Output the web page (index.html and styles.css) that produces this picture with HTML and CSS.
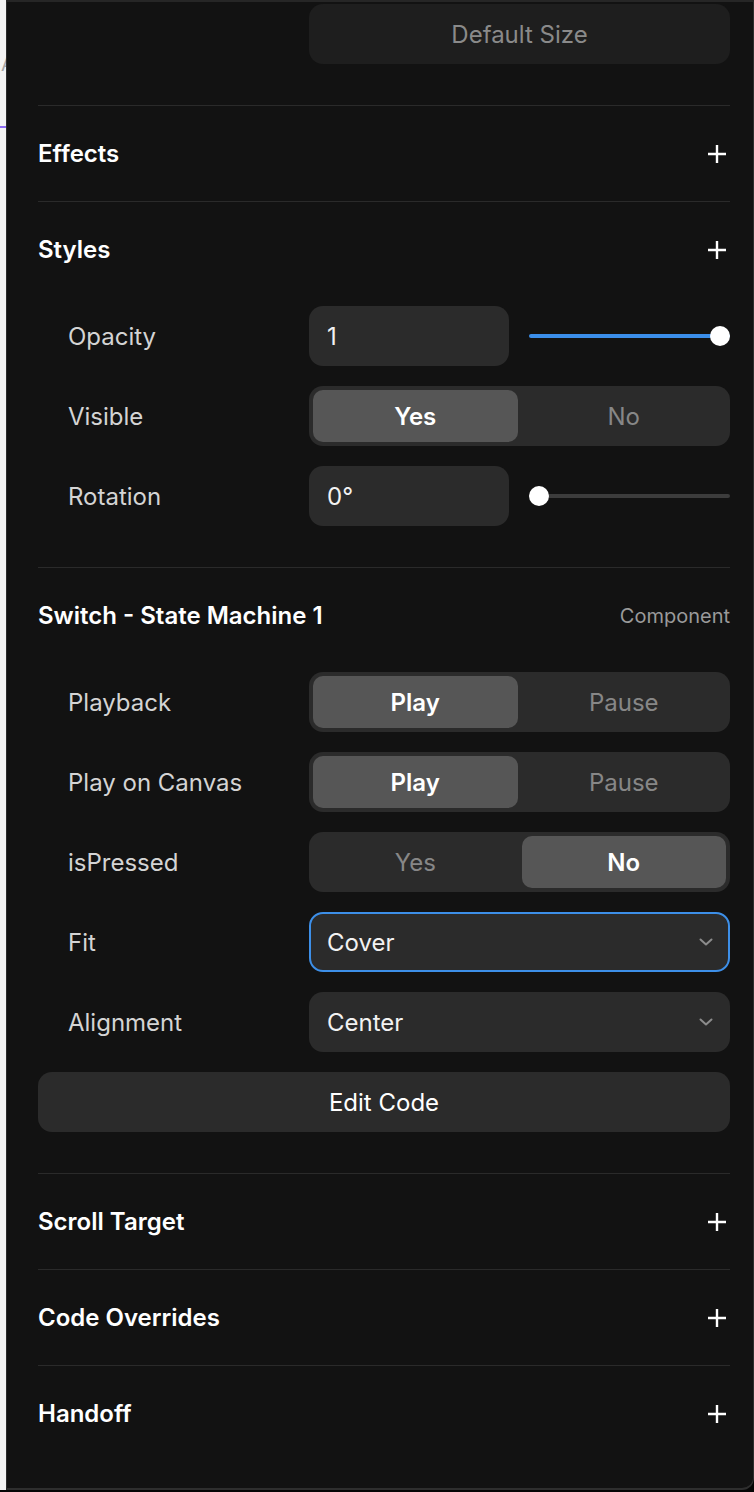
FILE: index.html
```html
<!DOCTYPE html>
<html>
<head>
<meta charset="utf-8">
<link rel="stylesheet" href="styles.css">
</head>
<body>
<div class="frame">
  <div class="strip">
    <span class="strip-letter">A</span>
    <span class="strip-line"></span>
  </div>
  <div class="panel">
    <div class="top-row">
      <div class="ghost-btn">Default Size</div>
    </div>

    <section class="section">
      <div class="sec-head"><span class="sec-title">Effects</span><svg class="plus" viewBox="0 0 18 18"><path d="M9 0V18M0 9H18"/></svg></div>
    </section>

    <section class="section">
      <div class="sec-head"><span class="sec-title">Styles</span><svg class="plus" viewBox="0 0 18 18"><path d="M9 0V18M0 9H18"/></svg></div>
      <div class="rows">
        <div class="row">
          <span class="label">Opacity</span>
          <div class="ctrl split">
            <div class="input">1</div>
            <div class="slider"><div class="track"><div class="fill" style="width:100%"></div></div><div class="thumb" style="left:100%"></div></div>
          </div>
        </div>
        <div class="row">
          <span class="label">Visible</span>
          <div class="ctrl seg">
            <div class="seg-item on">Yes</div>
            <div class="seg-item">No</div>
          </div>
        </div>
        <div class="row">
          <span class="label">Rotation</span>
          <div class="ctrl split">
            <div class="input">0°</div>
            <div class="slider"><div class="track"></div><div class="thumb" style="left:0%"></div></div>
          </div>
        </div>
      </div>
    </section>

    <section class="section">
      <div class="sec-head"><span class="sec-title">Switch - State Machine 1</span><span class="sec-meta">Component</span></div>
      <div class="rows">
        <div class="row">
          <span class="label">Playback</span>
          <div class="ctrl seg">
            <div class="seg-item on">Play</div>
            <div class="seg-item">Pause</div>
          </div>
        </div>
        <div class="row">
          <span class="label">Play on Canvas</span>
          <div class="ctrl seg">
            <div class="seg-item on">Play</div>
            <div class="seg-item">Pause</div>
          </div>
        </div>
        <div class="row">
          <span class="label">isPressed</span>
          <div class="ctrl seg">
            <div class="seg-item">Yes</div>
            <div class="seg-item on">No</div>
          </div>
        </div>
        <div class="row">
          <span class="label">Fit</span>
          <div class="ctrl select focus">
            <span>Cover</span>
            <svg class="chev" viewBox="0 0 14 8"><path d="M1.5 1.5L7 6.5L12.5 1.5"/></svg>
          </div>
        </div>
        <div class="row">
          <span class="label">Alignment</span>
          <div class="ctrl select">
            <span>Center</span>
            <svg class="chev" viewBox="0 0 14 8"><path d="M1.5 1.5L7 6.5L12.5 1.5"/></svg>
          </div>
        </div>
        <div class="wide-btn">Edit Code</div>
      </div>
    </section>

    <section class="section">
      <div class="sec-head"><span class="sec-title">Scroll Target</span><svg class="plus" viewBox="0 0 18 18"><path d="M9 0V18M0 9H18"/></svg></div>
    </section>

    <section class="section">
      <div class="sec-head"><span class="sec-title">Code Overrides</span><svg class="plus" viewBox="0 0 18 18"><path d="M9 0V18M0 9H18"/></svg></div>
    </section>

    <section class="section last">
      <div class="sec-head"><span class="sec-title">Handoff</span><svg class="plus" viewBox="0 0 18 18"><path d="M9 0V18M0 9H18"/></svg></div>
    </section>
  </div>
</div>
</body>
</html>
```

FILE: styles.css
```css
html, body {
  margin: 0;
  padding: 0;
  background: #050505;
}

body {
  font-family: Inter, "Noto Sans", sans-serif;
  color: #fff;
  -webkit-font-smoothing: antialiased;
}

.frame {
  display: flex;
  width: 754px;
  height: 1490px;
}

.strip {
  position: relative;
  width: 6px;
  flex: none;
  background: #f4f4f4;
  overflow: hidden;
}

.strip-letter {
  position: absolute;
  left: 1px;
  top: 54px;
  font-size: 19px;
  line-height: 22px;
  color: #a6a6a6;
}

.strip-line {
  position: absolute;
  left: 0;
  top: 126px;
  width: 6px;
  height: 2px;
  background: #8d6cf2;
}

.panel {
  flex: 1;
  box-sizing: border-box;
  background: #121212;
  border-left: 1px solid #2c2c2c;
  border-top: 2px solid #262626;
  border-bottom: 2px solid #2e2e2e;
  border-right: 1px solid #2e2e2e;
  border-bottom-right-radius: 12px;
  padding: 2px 23px 0 31px;
}

.top-row {
  display: flex;
  justify-content: flex-end;
  margin-bottom: 41px;
}

.ghost-btn {
  width: 421px;
  height: 60px;
  border-radius: 14px;
  background: #1e1e1e;
  color: #8a8a8a;
  font-size: 24px;
  display: flex;
  align-items: center;
  justify-content: center;
}

.section {
  border-top: 1px solid #2a2a2a;
}

.section:has(.rows) {
  padding-bottom: 41px;
}

.sec-head {
  height: 95px;
  display: flex;
  align-items: center;
  justify-content: space-between;
}

.sec-title {
  font-size: 24px;
  font-weight: 600;
  color: #fff;
}

.sec-meta {
  font-size: 20px;
  color: #9a9a9a;
}

.plus {
  width: 18px;
  height: 18px;
  margin-right: 4px;
  stroke: #fff;
  stroke-width: 2.4;
  fill: none;
}

.rows {
  margin-top: 9px;
  display: flex;
  flex-direction: column;
  gap: 20px;
}

.row {
  display: flex;
  align-items: center;
  height: 60px;
  padding-left: 30px;
}

.label {
  width: 241px;
  flex: none;
  font-size: 24px;
  color: #d4d4d4;
}

.ctrl {
  flex: 1;
  height: 60px;
  box-sizing: border-box;
}

.split {
  display: flex;
  align-items: center;
  gap: 20px;
}

.input {
  width: 200px;
  height: 60px;
  flex: none;
  box-sizing: border-box;
  border-radius: 14px;
  background: #2b2b2b;
  padding-left: 18px;
  display: flex;
  align-items: center;
  font-size: 24px;
  color: #f2f2f2;
}

.slider {
  position: relative;
  flex: 1;
  height: 20px;
  margin: 0 10px;
}

.track {
  position: absolute;
  left: -10px;
  right: -10px;
  top: 8px;
  height: 4px;
  border-radius: 2px;
  background: #3c3c3c;
  overflow: hidden;
}

.fill {
  height: 100%;
  background: #3b8eea;
}

.thumb {
  position: absolute;
  top: 0;
  width: 20px;
  height: 20px;
  margin-left: -10px;
  border-radius: 50%;
  background: #fff;
}

.seg {
  display: flex;
  padding: 4px;
  gap: 4px;
  border-radius: 14px;
  background: #2b2b2b;
}

.seg-item {
  flex: 1;
  border-radius: 10px;
  display: flex;
  align-items: center;
  justify-content: center;
  font-size: 24px;
  color: #878787;
}

.seg-item.on {
  background: #565656;
  color: #fff;
  font-weight: 600;
}

.select {
  display: flex;
  align-items: center;
  justify-content: space-between;
  padding: 0 17px 0 18px;
  border-radius: 14px;
  background: #2b2b2b;
  font-size: 24px;
  color: #f2f2f2;
}

.select.focus {
  border: 2px solid #3d8fe8;
  padding: 0 15px 0 16px;
}

.chev {
  width: 14px;
  height: 8px;
  stroke: #8c8c8c;
  stroke-width: 2;
  fill: none;
  stroke-linecap: round;
  stroke-linejoin: round;
}

.wide-btn {
  height: 60px;
  border-radius: 14px;
  background: #2b2b2b;
  display: flex;
  align-items: center;
  justify-content: center;
  font-size: 24px;
  color: #fff;
}
```
